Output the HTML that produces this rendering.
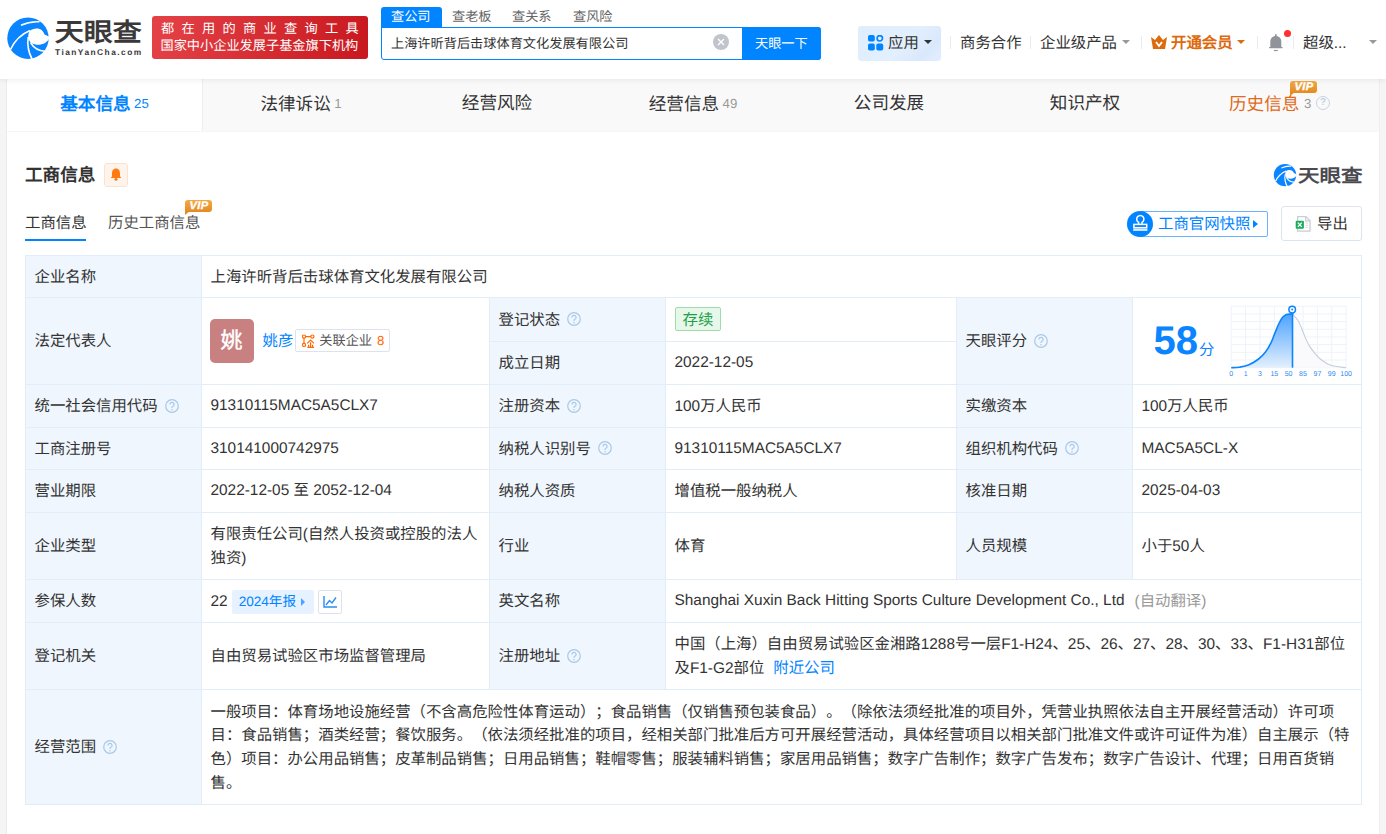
<!DOCTYPE html>
<html lang="zh-CN"><head><meta charset="utf-8">
<style>
*{margin:0;padding:0;box-sizing:border-box}
html,body{width:1386px;height:834px;overflow:hidden;background:#f5f5f5;font-family:"Liberation Sans",sans-serif;color:#333;text-spacing-trim:space-all;text-rendering:geometricPrecision}
.a{position:absolute;white-space:nowrap}
#hdr{position:absolute;left:0;top:0;width:1386px;height:79px;background:#fff;box-shadow:0 1px 6px rgba(0,0,0,.08);z-index:5}
#card{position:absolute;left:7px;top:79px;width:1373px;height:760px;background:#fff}
#tabs{position:absolute;left:7px;top:79px;width:1373px;height:52px;background:#f9f9f9}
.tab{position:absolute;top:0;height:52px;font-size:17.6px;line-height:49.6px;color:#333;text-align:center}
.tab sup{font-size:13.2px;color:#999;vertical-align:2px;margin-left:3.5px}
.sep{position:absolute;top:36px;width:1px;height:13px;background:#e9ebef}
.nav{font-size:15.4px;color:#333;top:32.5px;line-height:22px}
.caret{position:absolute;width:0;height:0;border-left:4px solid transparent;border-right:4px solid transparent;border-top:4px solid #999}
.c{position:absolute;display:flex;align-items:center;font-size:15.4px;line-height:23.6px;padding-left:8.5px;padding-top:2px;white-space:nowrap}
.lb{background:#eff6fd}
.hl{position:absolute;height:1px;background:#e3edf7}
.vl{position:absolute;width:1px;background:#e3edf7}
.lt{position:relative;top:-1px}
.q{display:inline-block;position:relative;top:-1.5px;margin-left:7px;flex:none}
.av{display:inline-block;position:relative;top:-1px;margin-left:-1px;width:44px;height:44px;border-radius:5px;background:#c98080;color:#fff;font-size:22px;-webkit-text-stroke:0.4px #fff;line-height:45.5px;line-height:44px;text-align:center}
.glk{display:inline-flex;align-items:center;position:relative;top:-1.5px;height:23px;margin-left:2px;padding:0 5px 0 6px;border:1px solid #dde3ee;border-radius:2px;font-size:13.2px;color:#555}
.tag{display:inline-block;position:relative;top:-1.5px;height:24px;line-height:25px;padding:0 7px;background:#e5f8e9;border:1px solid #9edcae;border-radius:2px;color:#1f9e4b}
.nb{display:inline-flex;align-items:center;position:relative;top:0px;height:24px;margin-left:4px;padding:0 8.5px 0 7px;background:#e6f2ff;border-radius:2px;color:#0084ff;font-size:13.6px}
.tri{display:inline-block;width:0;height:0;border-top:4px solid transparent;border-bottom:4px solid transparent;border-left:4px solid #4aa3ff;margin-left:5px}
.cb{display:inline-flex;align-items:center;justify-content:center;position:relative;top:0px;width:24px;height:24px;margin-left:4px;border:1px solid #dde3ec;border-radius:2px}
.vip{width:27px;height:12px;background:linear-gradient(#f3a945,#e48a22);border-radius:3px 3px 3px 0;color:#fff;font-size:11px;line-height:13.5px;font-weight:bold;font-style:italic;text-align:center;letter-spacing:0.5px;text-indent:1px;-webkit-text-stroke:0.4px #fff}
.vip:after{content:"";position:absolute;left:0;top:11px;border-top:4px solid #e48a22;border-right:5px solid transparent}
</style></head><body>
<div id="card"></div>
<div id="tabs"></div>
<div class="a" style="left:6px;top:79px;width:1px;height:755px;background:#ececec"></div>
<div class="a" style="left:1379px;top:79px;width:1px;height:755px;background:#efefef"></div>
<div id="hdr">
  <!-- logo -->
  <svg class="a" style="left:4px;top:14px" width="48" height="48" viewBox="0 0 48 48">
    <circle cx="24" cy="24.2" r="20.7" fill="#0a84ff"/>
    <path d="M25.5 17 C30 13.5 38 13 40.5 20.5 L46 23 C43 31 33 32.5 27.5 29 C24 26.5 23.5 21 25.5 17 Z" fill="#fff"/>
    <path d="M6.5 35.5 Q13 22 26 16.6" stroke="#fff" stroke-width="1.6" fill="none"/>
    <path d="M17 11.3 Q26 7 35.5 7.8" stroke="#fff" stroke-width="1.5" fill="none"/>
    <path d="M24.2 23 C23 32 24.5 38.5 28 45" stroke="#fff" stroke-width="1.6" fill="none"/>
    <path d="M26.5 28.5 C30 34.5 36 37 41 37.2" stroke="#fff" stroke-width="1.5" fill="none"/>
  </svg>
  <div class="a" style="left:54.7px;top:18.3px;font-size:29px;line-height:34px;font-weight:bold;color:#3b3839;transform:scale(1,0.88);transform-origin:0 0">天眼查</div>
  <div class="a" style="left:55px;top:47px;font-size:8.4px;line-height:10px;font-weight:bold;color:#3b3839;letter-spacing:1.45px">TianYanCha.com</div>
  <!-- red banner -->
  <div class="a" style="left:152px;top:16px;width:216px;height:43px;border-radius:3px;background:linear-gradient(100deg,#e44247,#c8181f)"></div>
  <div class="a" style="left:161px;top:19.5px;font-size:13.2px;line-height:17px;color:#fff;letter-spacing:7.32px">都在用的商业查询工具</div>
  <div class="a" style="left:160.5px;top:37px;font-size:13.2px;line-height:17px;color:#fff;letter-spacing:0px">国家中小企业发展子基金旗下机构</div>
  <!-- search -->
  <div class="a" style="left:381px;top:7px;width:61px;height:21px;background:#0084ff;border-radius:3px 3px 0 0"></div>
  <div class="a" style="left:391px;top:7px;font-size:13.2px;line-height:20px;color:#fff">查公司</div>
  <div class="a" style="left:452px;top:7px;font-size:13.2px;line-height:20px;color:#666">查老板</div>
  <div class="a" style="left:512px;top:7px;font-size:13.2px;line-height:20px;color:#666">查关系</div>
  <div class="a" style="left:573px;top:7px;font-size:13.2px;line-height:20px;color:#666">查风险</div>
  <div class="a" style="left:381px;top:27px;width:440px;height:33px;border:1px solid #0084ff;border-radius:0 3px 3px 3px;background:#fff"></div>
  <div class="a" style="left:391px;top:34px;font-size:13.2px;line-height:20px;color:#333">上海许昕背后击球体育文化发展有限公司</div>
  <svg class="a" style="left:713px;top:34px" width="16" height="16" viewBox="0 0 16 16"><circle cx="8" cy="8" r="8" fill="#c0c4cc"/><path d="M5 5L11 11M11 5L5 11" stroke="#fff" stroke-width="1.4"/></svg>
  <div class="a" style="left:742px;top:27px;width:79px;height:33px;background:#0084ff;border-radius:0 3px 3px 0"></div>
  <div class="a" style="left:755px;top:33.7px;font-size:13.2px;line-height:20px;color:#fff">天眼一下</div>
  <!-- nav -->
  <div class="a" style="left:858px;top:26px;width:83px;height:35px;background:linear-gradient(135deg,#dfedfd,#e2effe 55%,#d9e8fc 80%,#e3effe);border-radius:3px"></div>
  <svg class="a" style="left:867.5px;top:35.3px" width="16" height="16" viewBox="0 0 16 16">
    <rect x="0" y="0" width="6.8" height="6.6" rx="1.8" fill="#0084ff"/>
    <circle cx="11.8" cy="3.3" r="2.7" fill="none" stroke="#0084ff" stroke-width="1.7"/>
    <rect x="0" y="8.6" width="6.8" height="6.9" rx="1.8" fill="#0084ff"/>
    <rect x="8.3" y="8.6" width="6.9" height="6.9" rx="1.8" fill="#0084ff"/>
  </svg>
  <div class="a nav" style="left:888px">应用</div>
  <div class="caret" style="left:924px;top:40px;border-top-color:#333"></div>
  <div class="sep" style="left:950px"></div>
  <div class="a nav" style="left:960px">商务合作</div>
  <div class="sep" style="left:1030px"></div>
  <div class="a nav" style="left:1040px">企业级产品</div>
  <div class="caret" style="left:1122px;top:40px"></div>
  <div class="sep" style="left:1141px"></div>
  <svg class="a" style="left:1151px;top:35px" width="16" height="14" viewBox="0 0 16 14"><path d="M0 2 L4 5 L8 0 L12 5 L16 2 L14 14 L2 14 Z" fill="#dc6a0e"/><path d="M5 7 L8 11 L11 7" stroke="#fff" stroke-width="1.8" fill="none"/></svg>
  <div class="a nav" style="left:1171px;color:#dc6a0e;font-weight:bold">开通会员</div>
  <div class="caret" style="left:1237px;top:40px;border-top-color:#dc6a0e"></div>
  <div class="sep" style="left:1257px"></div>
  <svg class="a" style="left:1268px;top:33px" width="16" height="19" viewBox="0 0 16 19"><rect x="7" y="1.2" width="1.6" height="2.4" fill="#909399"/><path d="M2.3 14.2 V8.8 C2.3 5.2 4.6 3 7.8 3 C11 3 13.3 5.2 13.3 8.8 V14.2 Z" fill="#909399"/><rect x="1" y="13.9" width="13.7" height="1.3" rx=".6" fill="#909399"/><rect x="5.9" y="16.9" width="3.8" height="1.2" fill="#909399"/></svg>
  <div class="a" style="left:1284px;top:30px;width:7px;height:7px;border-radius:50%;background:#ff3030"></div>
  <div class="sep" style="left:1293px"></div>
  <div class="a nav" style="left:1303px">超级...</div>
  <div class="caret" style="left:1369px;top:40px"></div>
</div>
<!-- tabs -->
<div class="a" style="left:7px;top:79px;width:196px;height:52px;background:#fff;border-right:1px solid #eee"></div>
<div class="a" style="left:7px;top:131px;width:1373px;height:1px;background:#f6f6f6"></div>
<div class="tab" style="left:7px;width:195px;top:79px;color:#0084ff;font-weight:bold">基本信息<sup style="color:#0084ff;font-weight:normal">25</sup></div>
<div class="tab" style="left:203px;width:196px;top:79px">法律诉讼<sup>1</sup></div>
<div class="tab" style="left:399px;width:196px;top:79px">经营风险</div>
<div class="tab" style="left:595px;width:196px;top:79px">经营信息<sup>49</sup></div>
<div class="tab" style="left:791px;width:196px;top:79px">公司发展</div>
<div class="tab" style="left:987px;width:196px;top:79px">知识产权</div>
<div class="a" style="left:1229px;top:79px;font-size:17.6px;line-height:51.6px;color:#e06a1a">历史信息</div>
<div class="a" style="left:1304px;top:77.5px;font-size:13.2px;line-height:52px;color:#999">3</div>
<div class="a" style="left:1316px;top:96px;width:14px;height:14px;border:1px solid #c4d4e4;border-radius:50%;font-size:10px;line-height:12px;text-align:center;color:#c4d4e4;font-weight:bold">?</div>
<div class="a vip" style="left:1290px;top:81px">VIP</div>

<!-- section header -->
<div class="a" style="left:25px;top:162px;font-size:17.6px;line-height:26px;font-weight:bold;color:#333">工商信息</div>
<div class="a" style="left:104px;top:163px;width:24px;height:24px;background:#fff4eb;border:1px solid #fde3cf;border-radius:3px"></div>
<svg class="a" style="left:110px;top:168px" width="12" height="13" viewBox="0 0 12 13"><path d="M6 0.5 C3 0.5 2 3 2 5.5 L2 8.5 L0.5 10 L11.5 10 L10 8.5 L10 5.5 C10 3 9 0.5 6 0.5Z" fill="#ff7a0f"/><circle cx="6" cy="11.3" r="1.5" fill="#ff7a0f"/></svg>
<!-- right logo -->
<svg class="a" style="left:1271.5px;top:162.3px" width="26" height="26" viewBox="0 0 48 48">
    <circle cx="24" cy="24.2" r="20.7" fill="#0a84ff"/>
    <path d="M25.5 17 C30 13.5 38 13 40.5 20.5 L46 23 C43 31 33 32.5 27.5 29 C24 26.5 23.5 21 25.5 17 Z" fill="#fff"/>
    <path d="M6.5 35.5 Q13 22 26 16.6" stroke="#fff" stroke-width="2.2" fill="none"/>
    <path d="M17 11.3 Q26 7 35.5 7.8" stroke="#fff" stroke-width="2" fill="none"/>
    <path d="M24.2 23 C23 32 24.5 38.5 28 45" stroke="#fff" stroke-width="2.2" fill="none"/>
    <path d="M26.5 28.5 C30 34.5 36 37 41 37.2" stroke="#fff" stroke-width="2" fill="none"/>
  </svg>
<div class="a" style="left:1298px;top:165px;font-size:21.5px;line-height:26px;font-weight:bold;color:#4a4a50;transform:scale(1,0.84);transform-origin:0 0;-webkit-text-stroke:0px">天眼查</div>

<!-- sub tabs -->
<div class="a" style="left:25px;top:213px;font-size:15.4px;line-height:22px;color:#333">工商信息</div>
<div class="a" style="left:25px;top:239px;width:61px;height:2px;background:#0084ff"></div>
<div class="a" style="left:108px;top:213px;font-size:15.4px;line-height:22px;color:#555">历史工商信息</div>
<div class="a vip" style="left:185px;top:200px">VIP</div>

<!-- buttons -->
<div class="a" style="left:1140px;top:211px;width:128px;height:26px;border:1px solid #69b3ff;border-radius:2px"></div>
<svg class="a" style="left:1127px;top:211px" width="26" height="26" viewBox="0 0 26 26"><circle cx="13" cy="13" r="13" fill="#0084ff"/>
<path d="M11.6 13.2 L11.6 11.3 A3.6 3.6 0 1 1 15 11.3 L15 13.2" fill="none" stroke="#fff" stroke-width="1.5"/>
<rect x="6.9" y="13.4" width="12.8" height="3.3" fill="#0084ff" stroke="#fff" stroke-width="1.5"/>
<rect x="6.2" y="17.6" width="14.2" height="2.3" fill="#dcecff"/></svg>
<div class="a" style="left:1158px;top:214px;font-size:15.4px;line-height:22px;color:#0084ff">工商官网快照</div>
<div class="a" style="left:1253px;top:220px;width:0;height:0;border-top:4px solid transparent;border-bottom:4px solid transparent;border-left:5px solid #0084ff"></div>
<div class="a" style="left:1281px;top:206px;width:81px;height:35px;border:1px solid #dfe3eb;border-radius:3px;background:#fff"></div>
<svg class="a" style="left:1295px;top:215px" width="17" height="18" viewBox="0 0 17 18">
<path d="M2.7 1.6 H10.8 L15 5.6 V16.2 H2.7 Z" fill="#fff" stroke="#c9cdd4" stroke-width="1.3"/>
<path d="M10.6 1.6 V5.8 H15" fill="none" stroke="#c9cdd4" stroke-width="1.2"/>
<g stroke="#d3d6dc" stroke-width="0.9"><line x1="10.5" y1="8" x2="13" y2="8"/><line x1="10.5" y1="10.3" x2="13" y2="10.3"/><line x1="10.5" y1="12.4" x2="13" y2="12.4"/></g>
<rect x="0.7" y="5.7" width="8.2" height="8.1" rx="1" fill="#1aab5e"/>
<path d="M2.8 7.6 L6.8 11.9 M6.8 7.6 L2.8 11.9" stroke="#fff" stroke-width="1.3"/></svg>
<div class="a" style="left:1317px;top:214px;font-size:15.4px;line-height:22px;color:#333">导出</div>

<div id="tbl">
<div class="a lb" style="left:26px;top:256px;width:175px;height:548px"></div>
<div class="a lb" style="left:490px;top:298px;width:175px;height:391px"></div>
<div class="a lb" style="left:957px;top:298px;width:175px;height:281px"></div>
<div class="hl" style="left:25px;top:255px;width:1337px"></div>
<div class="hl" style="left:25px;top:297px;width:1337px"></div>
<div class="hl" style="left:25px;top:384px;width:1337px"></div>
<div class="hl" style="left:25px;top:427px;width:1337px"></div>
<div class="hl" style="left:25px;top:469px;width:1337px"></div>
<div class="hl" style="left:25px;top:512px;width:1337px"></div>
<div class="hl" style="left:25px;top:579px;width:1337px"></div>
<div class="hl" style="left:25px;top:622px;width:1337px"></div>
<div class="hl" style="left:25px;top:689px;width:1337px"></div>
<div class="hl" style="left:25px;top:804px;width:1337px"></div>
<div class="hl" style="left:489px;top:341px;width:467px"></div>
<div class="vl" style="left:25px;top:255px;height:550px"></div>
<div class="vl" style="left:1361px;top:255px;height:550px"></div>
<div class="vl" style="left:201px;top:255px;height:550px"></div>
<div class="vl" style="left:489px;top:297px;height:392px"></div>
<div class="vl" style="left:665px;top:297px;height:392px"></div>
<div class="vl" style="left:956px;top:297px;height:282px"></div>
<div class="vl" style="left:1132px;top:297px;height:282px"></div>
<div class="c" style="left:26px;top:256px;width:175px;height:41px;">企业名称</div>
<div class="c" style="left:202px;top:256px;width:1159px;height:41px;">上海许昕背后击球体育文化发展有限公司</div>
<div class="c" style="left:26px;top:298px;width:175px;height:86px;">法定代表人</div>
<div class="c" style="left:202px;top:298px;width:287px;height:86px;"><span class="av">姚</span><span style="color:#0084ff;margin-left:9px">姚彦</span><span class="glk"><svg width="13" height="14" viewBox="0 0 13 14" style="margin-right:4px"><g fill="none" stroke="#ff6a00" stroke-width="1.2"><circle cx="2" cy="2.6" r="1.6"/><circle cx="10.4" cy="2.6" r="1.6"/><circle cx="2" cy="10.9" r="1.6"/><path d="M3.6 2.6H8.8M2 4.2V9.3"/><path d="M5.2 9.4L8.6 6L12 9.4M8.6 8.3V13.2M5.4 13.3H12M6.6 10.8V13.2M10.6 10.8V13.2"/></g></svg>关联企业<span style="color:#ff6a00;margin-left:5px">8</span></span></div>
<div class="c" style="left:490px;top:298px;width:175px;height:43px;">登记状态<svg class="q" width="14" height="14" viewBox="0 0 14 14"><circle cx="7" cy="7" r="6.3" fill="none" stroke="#a9c9ea" stroke-width="1.2"/><path d="M4.9 5.4 A2.1 2.1 0 1 1 7.9 7.3 C7.3 7.6 7 8 7 8.7 V9.1" fill="none" stroke="#a9c9ea" stroke-width="1.2"/><circle cx="7" cy="10.8" r="0.8" fill="#a9c9ea"/></svg></div>
<div class="c" style="left:666px;top:298px;width:290px;height:43px;"><span class="tag">存续</span></div>
<div class="c" style="left:490px;top:342px;width:175px;height:42px;">成立日期</div>
<div class="c" style="left:666px;top:342px;width:290px;height:42px;"><span class="lt">2022-12-05</span></div>
<div class="c" style="left:957px;top:298px;width:175px;height:86px;">天眼评分<svg class="q" width="14" height="14" viewBox="0 0 14 14"><circle cx="7" cy="7" r="6.3" fill="none" stroke="#a9c9ea" stroke-width="1.2"/><path d="M4.9 5.4 A2.1 2.1 0 1 1 7.9 7.3 C7.3 7.6 7 8 7 8.7 V9.1" fill="none" stroke="#a9c9ea" stroke-width="1.2"/><circle cx="7" cy="10.8" r="0.8" fill="#a9c9ea"/></svg></div>
<div class="c" style="left:1133px;top:298px;width:228px;height:86px;"></div>
<div class="c" style="left:26px;top:385px;width:175px;height:42px;">统一社会信用代码<svg class="q" width="14" height="14" viewBox="0 0 14 14"><circle cx="7" cy="7" r="6.3" fill="none" stroke="#a9c9ea" stroke-width="1.2"/><path d="M4.9 5.4 A2.1 2.1 0 1 1 7.9 7.3 C7.3 7.6 7 8 7 8.7 V9.1" fill="none" stroke="#a9c9ea" stroke-width="1.2"/><circle cx="7" cy="10.8" r="0.8" fill="#a9c9ea"/></svg></div>
<div class="c" style="left:202px;top:385px;width:287px;height:42px;"><span class="lt">91310115MAC5A5CLX7</span></div>
<div class="c" style="left:490px;top:385px;width:175px;height:42px;">注册资本<svg class="q" width="14" height="14" viewBox="0 0 14 14"><circle cx="7" cy="7" r="6.3" fill="none" stroke="#a9c9ea" stroke-width="1.2"/><path d="M4.9 5.4 A2.1 2.1 0 1 1 7.9 7.3 C7.3 7.6 7 8 7 8.7 V9.1" fill="none" stroke="#a9c9ea" stroke-width="1.2"/><circle cx="7" cy="10.8" r="0.8" fill="#a9c9ea"/></svg></div>
<div class="c" style="left:666px;top:385px;width:290px;height:42px;">100万人民币</div>
<div class="c" style="left:957px;top:385px;width:175px;height:42px;">实缴资本</div>
<div class="c" style="left:1133px;top:385px;width:228px;height:42px;">100万人民币</div>
<div class="c" style="left:26px;top:428px;width:175px;height:41px;">工商注册号</div>
<div class="c" style="left:202px;top:428px;width:287px;height:41px;"><span class="lt">310141000742975</span></div>
<div class="c" style="left:490px;top:428px;width:175px;height:41px;">纳税人识别号<svg class="q" width="14" height="14" viewBox="0 0 14 14"><circle cx="7" cy="7" r="6.3" fill="none" stroke="#a9c9ea" stroke-width="1.2"/><path d="M4.9 5.4 A2.1 2.1 0 1 1 7.9 7.3 C7.3 7.6 7 8 7 8.7 V9.1" fill="none" stroke="#a9c9ea" stroke-width="1.2"/><circle cx="7" cy="10.8" r="0.8" fill="#a9c9ea"/></svg></div>
<div class="c" style="left:666px;top:428px;width:290px;height:41px;"><span class="lt">91310115MAC5A5CLX7</span></div>
<div class="c" style="left:957px;top:428px;width:175px;height:41px;">组织机构代码<svg class="q" width="14" height="14" viewBox="0 0 14 14"><circle cx="7" cy="7" r="6.3" fill="none" stroke="#a9c9ea" stroke-width="1.2"/><path d="M4.9 5.4 A2.1 2.1 0 1 1 7.9 7.3 C7.3 7.6 7 8 7 8.7 V9.1" fill="none" stroke="#a9c9ea" stroke-width="1.2"/><circle cx="7" cy="10.8" r="0.8" fill="#a9c9ea"/></svg></div>
<div class="c" style="left:1133px;top:428px;width:228px;height:41px;"><span class="lt">MAC5A5CL-X</span></div>
<div class="c" style="left:26px;top:470px;width:175px;height:42px;">营业期限</div>
<div class="c" style="left:202px;top:470px;width:287px;height:42px;"><span class="lt">2022-12-05 至 2052-12-04</span></div>
<div class="c" style="left:490px;top:470px;width:175px;height:42px;">纳税人资质</div>
<div class="c" style="left:666px;top:470px;width:290px;height:42px;">增值税一般纳税人</div>
<div class="c" style="left:957px;top:470px;width:175px;height:42px;">核准日期</div>
<div class="c" style="left:1133px;top:470px;width:228px;height:42px;"><span class="lt">2025-04-03</span></div>
<div class="c" style="left:26px;top:513px;width:175px;height:66px;">企业类型</div>
<div class="c" style="left:202px;top:513px;width:287px;height:66px;">有限责任公司(自然人投资或控股的法人<br>独资)</div>
<div class="c" style="left:490px;top:513px;width:175px;height:66px;">行业</div>
<div class="c" style="left:666px;top:513px;width:290px;height:66px;">体育</div>
<div class="c" style="left:957px;top:513px;width:175px;height:66px;">人员规模</div>
<div class="c" style="left:1133px;top:513px;width:228px;height:66px;">小于50人</div>
<div class="c" style="left:26px;top:580px;width:175px;height:42px;">参保人数</div>
<div class="c" style="left:202px;top:580px;width:287px;height:42px;">22<span class="nb">2024年报<i class="tri"></i></span><span class="cb"><svg width="14" height="12" viewBox="0 0 14 12"><path d="M1 0V11H14" stroke="#2d8cf0" stroke-width="1.4" fill="none"/><path d="M3 9L6.5 4.5L9 7L13 1.5" stroke="#2d8cf0" stroke-width="1.4" fill="none"/></svg></span></div>
<div class="c" style="left:490px;top:580px;width:175px;height:42px;">英文名称</div>
<div class="c" style="left:666px;top:580px;width:695px;height:42px;"><span class="lt">Shanghai Xuxin Back Hitting Sports Culture Development Co., Ltd</span><span style="color:#999;margin-left:10px">(自动翻译)</span></div>
<div class="c" style="left:26px;top:623px;width:175px;height:66px;">登记机关</div>
<div class="c" style="left:202px;top:623px;width:287px;height:66px;">自由贸易试验区市场监督管理局</div>
<div class="c" style="left:490px;top:623px;width:175px;height:66px;">注册地址<svg class="q" width="14" height="14" viewBox="0 0 14 14"><circle cx="7" cy="7" r="6.3" fill="none" stroke="#a9c9ea" stroke-width="1.2"/><path d="M4.9 5.4 A2.1 2.1 0 1 1 7.9 7.3 C7.3 7.6 7 8 7 8.7 V9.1" fill="none" stroke="#a9c9ea" stroke-width="1.2"/><circle cx="7" cy="10.8" r="0.8" fill="#a9c9ea"/></svg></div>
<div class="c" style="left:666px;top:623px;width:695px;height:66px;"><div>中国（上海）自由贸易试验区金湘路1288号一层F1-H24、25、26、27、28、30、33、F1-H31部位<br>及F1-G2部位<span style="color:#0084ff;margin-left:9px">附近公司</span></div></div>
<div class="c" style="left:26px;top:690px;width:175px;height:114px;">经营范围<svg class="q" width="14" height="14" viewBox="0 0 14 14"><circle cx="7" cy="7" r="6.3" fill="none" stroke="#a9c9ea" stroke-width="1.2"/><path d="M4.9 5.4 A2.1 2.1 0 1 1 7.9 7.3 C7.3 7.6 7 8 7 8.7 V9.1" fill="none" stroke="#a9c9ea" stroke-width="1.2"/><circle cx="7" cy="10.8" r="0.8" fill="#a9c9ea"/></svg></div>
<div class="c" style="left:202px;top:690px;width:1159px;height:114px;"><div>一般项目：体育场地设施经营（不含高危险性体育运动）；食品销售（仅销售预包装食品）。（除依法须经批准的项目外，凭营业执照依法自主开展经营活动）许可项<br>目：食品销售；酒类经营；餐饮服务。（依法须经批准的项目，经相关部门批准后方可开展经营活动，具体经营项目以相关部门批准文件或许可证件为准）自主展示（特<br>色）项目：办公用品销售；皮革制品销售；日用品销售；鞋帽零售；服装辅料销售；家居用品销售；数字广告制作；数字广告发布；数字广告设计、代理；日用百货销<br>售。</div></div>
<div class="a" style="left:1153.5px;top:319px;font-size:40px;line-height:45px;font-weight:bold;color:#0a84ff">58</div>
<div class="a" style="left:1199px;top:339.5px;font-size:15.4px;line-height:22px;color:#0a84ff">分</div>
<svg class="a" style="left:1225px;top:300px" width="132" height="80" viewBox="0 0 132 80">
<defs><linearGradient id="gf" x1="0" y1="0" x2="0" y2="1"><stop offset="0" stop-color="#4da3ff"/><stop offset="1" stop-color="#e3f0fd"/></linearGradient></defs>
<rect x="6.2" y="6.2" width="114.9" height="61.5" fill="#fff"/>
<g stroke="#edf3fa" stroke-width="1" fill="none"><line x1="6.20" y1="6.2" x2="6.20" y2="67.7"/><line x1="6.2" y1="6.20" x2="121.1" y2="6.20"/><line x1="20.56" y1="6.2" x2="20.56" y2="67.7"/><line x1="6.2" y1="13.89" x2="121.1" y2="13.89"/><line x1="34.92" y1="6.2" x2="34.92" y2="67.7"/><line x1="6.2" y1="21.57" x2="121.1" y2="21.57"/><line x1="49.29" y1="6.2" x2="49.29" y2="67.7"/><line x1="6.2" y1="29.26" x2="121.1" y2="29.26"/><line x1="63.65" y1="6.2" x2="63.65" y2="67.7"/><line x1="6.2" y1="36.95" x2="121.1" y2="36.95"/><line x1="78.01" y1="6.2" x2="78.01" y2="67.7"/><line x1="6.2" y1="44.64" x2="121.1" y2="44.64"/><line x1="92.38" y1="6.2" x2="92.38" y2="67.7"/><line x1="6.2" y1="52.33" x2="121.1" y2="52.33"/><line x1="106.74" y1="6.2" x2="106.74" y2="67.7"/><line x1="6.2" y1="60.01" x2="121.1" y2="60.01"/><line x1="121.10" y1="6.2" x2="121.10" y2="67.7"/><line x1="6.2" y1="67.70" x2="121.1" y2="67.70"/></g>
<path d="M67.5 14.2 C68.4 15.2 71.4 17.8 72.9 20.2 C74.5 22.6 75.5 25.8 76.8 28.8 C78.1 31.8 79.3 35.5 80.6 38.4 C81.9 41.3 82.9 43.5 84.5 46.1 C86.1 48.7 88.3 51.5 90.2 53.7 C92.1 55.9 93.4 57.6 96.0 59.5 C98.6 61.4 101.4 63.9 105.6 65.3 C109.8 66.7 118.5 67.3 121.1 67.7 L67.5 67.7 Z" fill="#f9fafc" opacity=".9"/>
<path d="M67.5 14.2 C68.4 15.2 71.4 17.8 72.9 20.2 C74.5 22.6 75.5 25.8 76.8 28.8 C78.1 31.8 79.3 35.5 80.6 38.4 C81.9 41.3 82.9 43.5 84.5 46.1 C86.1 48.7 88.3 51.5 90.2 53.7 C92.1 55.9 93.4 57.6 96.0 59.5 C98.6 61.4 101.4 63.9 105.6 65.3 C109.8 66.7 118.5 67.3 121.1 67.7" stroke="#c3ceda" stroke-width="1.1" fill="none"/>
<path d="M6.2 67.7 C7.6 67.6 11.4 67.7 14.4 67.2 C17.4 66.7 20.8 66.2 24.0 64.8 C27.2 63.4 30.9 61.1 33.6 59.0 C36.3 56.9 38.2 55.0 40.3 52.3 C42.4 49.6 44.5 45.9 46.1 42.7 C47.7 39.5 48.6 36.2 49.9 33.1 C51.2 30.0 52.4 26.6 53.7 24.0 C55.0 21.4 56.3 18.9 57.6 17.3 C58.9 15.7 59.8 14.9 61.4 14.4 C63.0 13.9 66.5 14.2 67.5 14.2 L67.5 67.7 L6.2 67.7 Z" fill="url(#gf)"/>
<path d="M6.2 67.7 C7.6 67.6 11.4 67.7 14.4 67.2 C17.4 66.7 20.8 66.2 24.0 64.8 C27.2 63.4 30.9 61.1 33.6 59.0 C36.3 56.9 38.2 55.0 40.3 52.3 C42.4 49.6 44.5 45.9 46.1 42.7 C47.7 39.5 48.6 36.2 49.9 33.1 C51.2 30.0 52.4 26.6 53.7 24.0 C55.0 21.4 56.3 18.9 57.6 17.3 C58.9 15.7 59.8 14.9 61.4 14.4 C63.0 13.9 66.5 14.2 67.5 14.2" stroke="#0a84ff" stroke-width="1.6" fill="none"/>
<line x1="67.5" y1="12" x2="67.5" y2="67.7" stroke="#0a84ff" stroke-width="1.6"/>
<path d="M65 12 L67.4 15 L69.6 12 Z" fill="#0a84ff"/><circle cx="67.2" cy="9.6" r="3.3" fill="#fff" stroke="#0a84ff" stroke-width="1.5"/>
<circle cx="67.2" cy="9.6" r="1" fill="#0a84ff"/>
<g font-family="Liberation Sans" font-size="7" fill="#2b8af5" text-anchor="middle"><text x="6.2" y="76">0</text><text x="20.6" y="76">1</text><text x="34.9" y="76">3</text><text x="49.3" y="76">15</text><text x="63.6" y="76">50</text><text x="78.0" y="76">85</text><text x="92.4" y="76">97</text><text x="106.7" y="76">99</text><text x="121.1" y="76">100</text></g>
</svg>
</div>
</body></html>
